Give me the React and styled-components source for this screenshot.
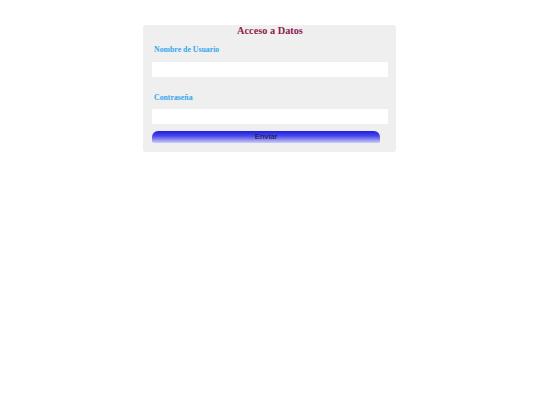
import styled, { createGlobalStyle } from "styled-components";

const GlobalStyle = createGlobalStyle`
  body {
    margin: 0;
    background: #fff;
    font-family: "Liberation Serif", serif;
  }
`;

const Panel = styled.form`
  width: 236px;
  margin: 25px 0 0 calc(50% - 127px);
  padding: 0 8px 9px 9px;
  background: #efefef;
  border-radius: 3px;
  display: flex;
  flex-direction: column;
`;

const Title = styled.h1`
  margin: 0 0 6px;
  height: 12px;
  line-height: 11px;
  font-size: 10.3px;
  font-weight: bold;
  text-align: center;
  color: #8e1c4e;
`;

const Label = styled.label`
  display: block;
  margin: ${(p) => (p.$first ? "0" : "14px")} 0 ${(p) => (p.$first ? "7px" : "6px")} 2px;
  height: 12px;
  line-height: 14px;
  font-size: 7.8px;
  font-weight: bold;
  color: #36a6f0;
`;

const Input = styled.input`
  box-sizing: border-box;
  width: 100%;
  height: 15px;
  margin: 0;
  padding: 0 3px;
  border: none;
  background: #fff;
  outline: none;
`;

const Button = styled.button`
  box-sizing: border-box;
  width: 228px;
  height: 12px;
  margin-top: 7px;
  padding: 0;
  border: none;
  border-radius: 6px 6px 2px 2px;
  background: linear-gradient(to bottom, #1f1fe0 0%, #4646ea 40%, #cdcdf6 100%);
  font-family: "Liberation Sans", Arial, sans-serif;
  font-size: 8px;
  line-height: 12px;
  color: #141430;
  cursor: pointer;
`;

export default function App() {
  return (
    <>
      <GlobalStyle />
      <Panel onSubmit={(e) => e.preventDefault()}>
        <Title>Acceso a Datos</Title>
        <Label $first htmlFor="usuario">Nombre de Usuario</Label>
        <Input id="usuario" type="text" />
        <Label htmlFor="clave">Contraseña</Label>
        <Input id="clave" type="password" />
        <Button type="submit">Enviar</Button>
      </Panel>
    </>
  );
}
